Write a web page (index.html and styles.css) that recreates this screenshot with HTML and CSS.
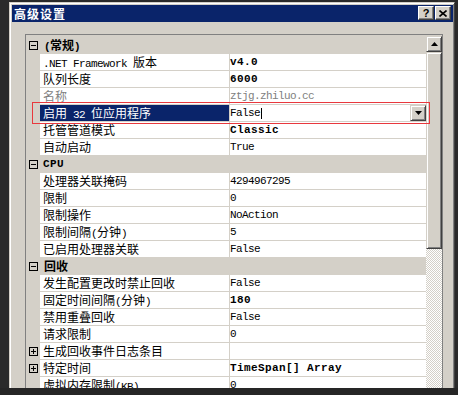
FILE: index.html
```html
<!DOCTYPE html>
<html>
<head>
<meta charset="utf-8">
<link rel="stylesheet" href="styles.css">
</head>
<body>
<div class="screen">
  <div class="window">
    <div class="titlebar">
      <span class="title">高级设置</span>
      <div class="tbtns">
        <span class="tbtn help">?</span>
        <span class="tbtn"><svg width="8" height="7" viewBox="0 0 8 7"><path d="M0.5 0.5L7.5 6.5M7.5 0.5L0.5 6.5" stroke="#000" stroke-width="1.6" fill="none"/></svg></span>
      </div>
    </div>
    <div class="grid">
      <div class="rows">
        <div class="row cat"><span class="gut"><svg class="box" width="9" height="9"><rect x=".5" y=".5" width="8" height="8" fill="none" stroke="#000"/><path d="M2 4.5h5" stroke="#000"/></svg></span><span class="cattext"><span class="l">(</span>常规<span class="l">)</span></span></div>
        <div class="row"><span class="gut"></span><span class="name"><span class="l">.NET Framework </span>版本</span><span class="val b">v4.0</span></div>
        <div class="row"><span class="gut"></span><span class="name">队列长度</span><span class="val b">6000</span></div>
        <div class="row dis"><span class="gut"></span><span class="name">名称</span><span class="val">ztjg.zhiluo.cc</span></div>
        <div class="row sel"><span class="gut"></span><span class="name">启用<span class="l"> 32 </span>位应用程序</span><span class="val">False<span class="caret"></span><span class="drop"><svg width="7" height="4"><polygon points="0,0 7,0 3.5,4" fill="#000"/></svg></span></span></div>
        <div class="row"><span class="gut"></span><span class="name">托管管道模式</span><span class="val b">Classic</span></div>
        <div class="row"><span class="gut"></span><span class="name">自动启动</span><span class="val">True</span></div>
        <div class="row cat"><span class="gut"><svg class="box" width="9" height="9"><rect x=".5" y=".5" width="8" height="8" fill="none" stroke="#000"/><path d="M2 4.5h5" stroke="#000"/></svg></span><span class="cattext l b">CPU</span></div>
        <div class="row"><span class="gut"></span><span class="name">处理器关联掩码</span><span class="val">4294967295</span></div>
        <div class="row"><span class="gut"></span><span class="name">限制</span><span class="val">0</span></div>
        <div class="row"><span class="gut"></span><span class="name">限制操作</span><span class="val">NoAction</span></div>
        <div class="row"><span class="gut"></span><span class="name">限制间隔<span class="l">(</span>分钟<span class="l">)</span></span><span class="val">5</span></div>
        <div class="row"><span class="gut"></span><span class="name">已启用处理器关联</span><span class="val">False</span></div>
        <div class="row cat"><span class="gut"><svg class="box" width="9" height="9"><rect x=".5" y=".5" width="8" height="8" fill="none" stroke="#000"/><path d="M2 4.5h5" stroke="#000"/></svg></span><span class="cattext">回收</span></div>
        <div class="row"><span class="gut"></span><span class="name">发生配置更改时禁止回收</span><span class="val">False</span></div>
        <div class="row"><span class="gut"></span><span class="name">固定时间间隔<span class="l">(</span>分钟<span class="l">)</span></span><span class="val b">180</span></div>
        <div class="row"><span class="gut"></span><span class="name">禁用重叠回收</span><span class="val">False</span></div>
        <div class="row"><span class="gut"></span><span class="name">请求限制</span><span class="val">0</span></div>
        <div class="row"><span class="gut"><svg class="box" width="9" height="9"><rect x=".5" y=".5" width="8" height="8" fill="none" stroke="#000"/><path d="M2 4.5h5M4.5 2v5" stroke="#000"/></svg></span><span class="name">生成回收事件日志条目</span><span class="val"></span></div>
        <div class="row"><span class="gut"><svg class="box" width="9" height="9"><rect x=".5" y=".5" width="8" height="8" fill="none" stroke="#000"/><path d="M2 4.5h5M4.5 2v5" stroke="#000"/></svg></span><span class="name">特定时间</span><span class="val b">TimeSpan[] Array</span></div>
        <div class="row"><span class="gut"></span><span class="name">虚拟内存限制<span class="l">(KB)</span></span><span class="val">0</span></div>
      </div>
      <div class="sb">
        <div class="sbbtn"><svg width="7" height="4"><polygon points="0,4 7,4 3.5,0" fill="#000"/></svg></div>
        <div class="thumb"></div>
        <div class="track"></div>
      </div>
    </div>
  </div>
  <div class="annot"></div>
</div>
</body>
</html>
```
FILE: styles.css
```css
html, body {
  margin: 0;
  padding: 0;
  background: #262626;
  overflow: hidden;
}
.screen {
  position: relative;
  width: 458px;
  height: 388px;
  overflow: hidden;
  box-sizing: border-box;
  padding: 2px 0 0 9px;
  background: #2a2a2a;
}
.window {
  width: 441px;
  height: 430px;
  background: #d4d0c8;
  border: 1px solid;
  border-color: #d4d0c8 #404040 #404040 #d4d0c8;
  box-shadow: inset 1px 1px #fff, inset -1px -1px #808080;
  padding: 2px 1px 0 2px;
  font-family: "Noto Sans CJK SC", sans-serif;
  font-size: 12px;
}
.titlebar {
  height: 17px;
  background: #0a246a;
  display: flex;
  align-items: flex-start;
}
.title {
  color: #fff;
  font-weight: bold;
  line-height: 17px;
  padding-left: 2px;
  letter-spacing: 1px;
}
.tbtns {
  margin-left: auto;
  margin-right: 2px;
  margin-top: 1px;
  display: flex;
  gap: 1px;
}
.tbtn {
  width: 16px;
  height: 14px;
  box-sizing: border-box;
  background: #d4d0c8;
  border: 1px solid;
  border-color: #fff #404040 #404040 #fff;
  box-shadow: inset -1px -1px #808080;
  display: flex;
  align-items: center;
  justify-content: center;
}
.help {
  font-family: "Liberation Sans", sans-serif;
  font-weight: bold;
  font-size: 11px;
  line-height: 12px;
  color: #000;
}
.grid {
  margin: 12px 0 0 13px;
  width: 416px;
  border: 1px solid #808080;
  display: flex;
  height: 380px;
}
.rows {
  width: 400px;
  padding-top: 2px;
}
.row {
  display: flex;
  height: 16px;
  border-bottom: 1px solid #d4d0c8;
  line-height: 16px;
  white-space: nowrap;
}
.gut {
  width: 14px;
  flex: none;
  background: #d4d0c8;
  display: flex;
  align-items: center;
}
.box {
  margin-left: 3px;
  display: block;
}
.name {
  width: 186px;
  flex: none;
  padding-left: 3px;
  background: #fff;
  border-right: 1px solid #d4d0c8;
  color: #000;
  overflow: hidden;
}
.val {
  width: 196px;
  flex: none;
  background: #fff;
  display: flex;
  align-items: center;
  font-family: "Liberation Mono", monospace;
  font-size: 11px;
  letter-spacing: -0.6px;
  color: #000;
}
.val.b {
  font-weight: bold;
  letter-spacing: 0.4px;
}
.l {
  font-family: "Liberation Mono", monospace;
  font-size: 11px;
  letter-spacing: -0.6px;
}
.b { font-weight: bold; }
.cat {
  background: #d4d0c8;
}
.cattext {
  padding-left: 4px;
  font-weight: bold;
}
.cattext.l {
  padding-left: 3px;
  letter-spacing: 0.4px;
}
.dis .name, .dis .val { color: #808080; }
.sel .name {
  background: #0a246a;
  color: #fff;
}
.caret {
  width: 1px;
  height: 11px;
  background: #000;
  margin-left: 1px;
}
.drop {
  margin-left: auto;
  width: 16px;
  height: 16px;
  box-sizing: border-box;
  background: #d4d0c8;
  border: 1px solid;
  border-color: #d4d0c8 #404040 #404040 #d4d0c8;
  box-shadow: inset 1px 1px #fff, inset -1px -1px #808080;
  display: flex;
  align-items: center;
  justify-content: center;
}
.sb {
  width: 16px;
  padding-top: 1px;
  display: flex;
  flex-direction: column;
}
.sbbtn, .thumb {
  width: 16px;
  box-sizing: border-box;
  background: #d4d0c8;
  border: 1px solid;
  border-color: #d4d0c8 #404040 #404040 #d4d0c8;
  box-shadow: inset 1px 1px #fff, inset -1px -1px #808080;
}
.sbbtn {
  height: 16px;
  display: flex;
  align-items: center;
  justify-content: center;
}
.thumb {
  height: 197px;
}
.track {
  flex: 1;
  background-image: repeating-conic-gradient(#d4d0c8 0 25%, #fff 0 50%);
  background-size: 2px 2px;
}
.annot {
  position: absolute;
  left: 32px;
  top: 102px;
  width: 396px;
  height: 20px;
  border: 1px solid #e8383d;
}
```
